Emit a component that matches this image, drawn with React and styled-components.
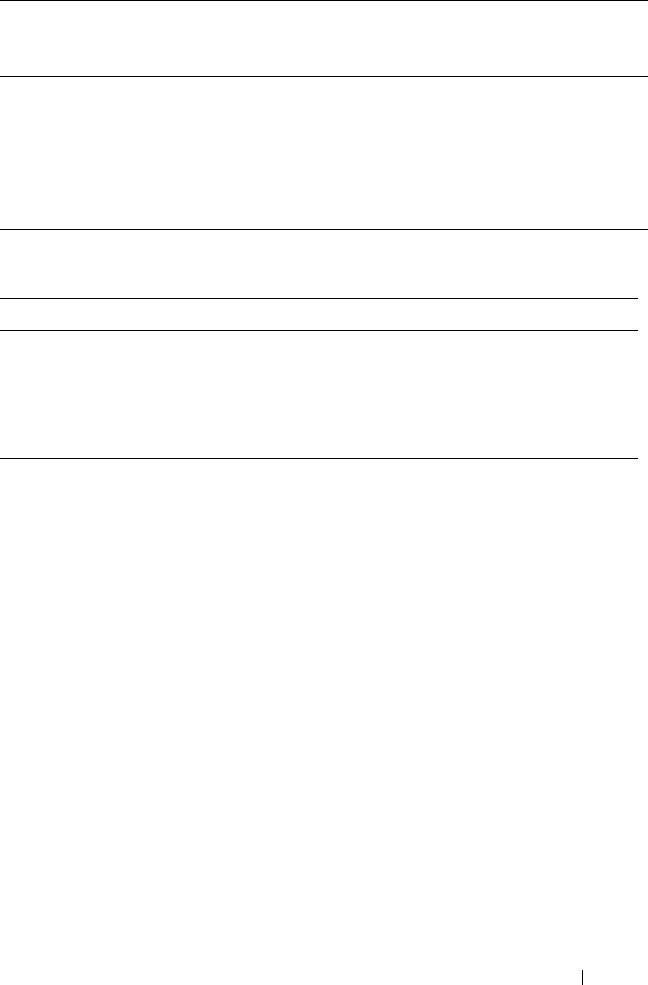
import React from "react";
import styled, { createGlobalStyle } from "styled-components";

const GlobalStyle = createGlobalStyle`
  html, body {
    margin: 0;
    padding: 0;
    background: #fff;
    font-family: "Liberation Serif", serif;
  }
`;

const Page = styled.div`
  width: 648px;
  height: 985px;
  display: flex;
  flex-direction: column;
  overflow: hidden;
  background: #fff;
`;

const Table = styled.div`
  width: ${(p) => p.width}px;
  margin-top: ${(p) => p.offset || 0}px;
  border-top: 1px solid #000;
  display: flex;
  flex-direction: column;
`;

const Row = styled.div`
  height: ${(p) => p.height}px;
  border-bottom: 1px solid #000;
  box-sizing: border-box;
`;

const Footer = styled.div`
  margin-top: auto;
  display: flex;
  align-items: flex-end;
  padding-left: 582px;
  height: 15px;
`;

const FooterRule = styled.span`
  width: 1px;
  height: 15px;
  background: #000;
`;

const App = () => {
  return (
    <>
      <GlobalStyle />
      <Page>
        <Table width={648}>
          <Row height={76} />
          <Row height={153} />
        </Table>
        <Table width={638} offset={68}>
          <Row height={32} />
          <Row height={128} />
        </Table>
        <Footer>
          <FooterRule />
        </Footer>
      </Page>
    </>
  );
};

export default App;
